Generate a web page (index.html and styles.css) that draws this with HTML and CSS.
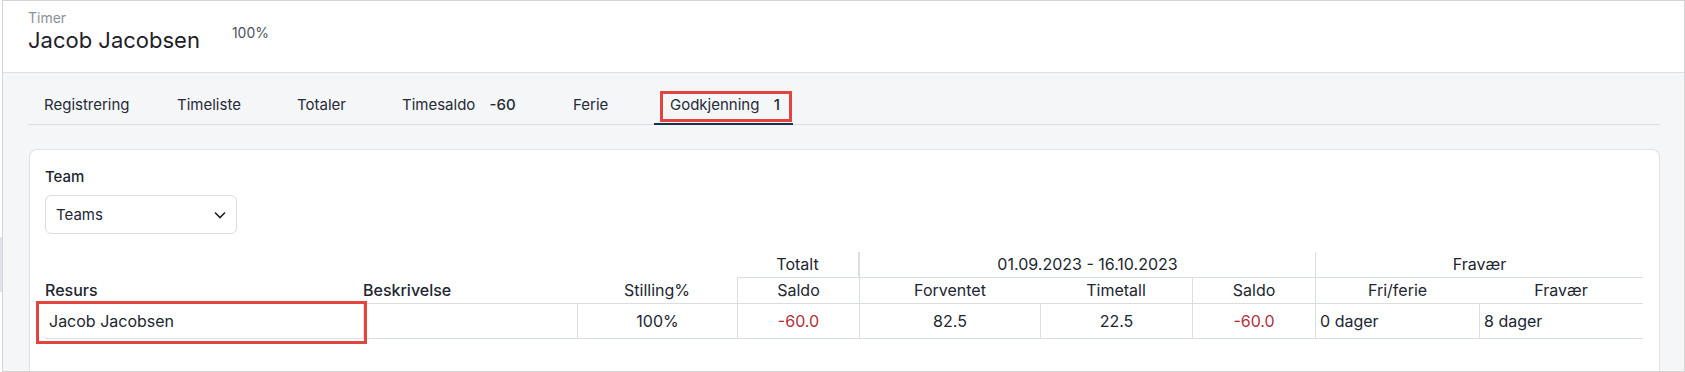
FILE: index.html
```html
<!DOCTYPE html>
<html lang="no">
<head>
    <meta charset="UTF-8">
    <meta name="viewport" content="width=device-width, initial-scale=1.0">
    <title>Timer - Jacob Jacobsen</title>
    <link rel="stylesheet" href="styles.css">
</head>
<body>
    <div class="gutter"><div class="gutter-mark"></div></div>
    <div class="frame">
        <header class="page-head">
            <div class="who">
                <div class="kicker">Timer</div>
                <h1 class="name">Jacob Jacobsen</h1>
            </div>
            <div class="pct">100%</div>
        </header>
        <main class="content">
            <nav class="tabs">
                <a class="tab">Registrering</a>
                <a class="tab">Timeliste</a>
                <a class="tab">Totaler</a>
                <a class="tab">Timesaldo <span class="count">-60</span></a>
                <a class="tab">Ferie</a>
                <a class="tab active">Godkjenning <span class="count">1</span><span class="mark"></span></a>
            </nav>
            <section class="card">
                <label class="field-label">Team</label>
                <div class="select">
                    <span>Teams</span>
                    <svg width="12" height="8" viewBox="0 0 12 8"><path d="M1 1.5l5 5 5-5" fill="none" stroke="#1f232b" stroke-width="1.6"/></svg>
                </div>
                <table class="grid">
                    <colgroup>
                        <col style="width:318px">
                        <col style="width:214px">
                        <col style="width:160px">
                        <col style="width:122px">
                        <col style="width:181px">
                        <col style="width:152px">
                        <col style="width:123px">
                        <col style="width:164px">
                        <col style="width:164px">
                    </colgroup>
                    <thead>
                        <tr>
                            <th rowspan="2" class="left">Resurs</th>
                            <th rowspan="2" class="left">Beskrivelse</th>
                            <th rowspan="2">Stilling%</th>
                            <th class="line">Totalt</th>
                            <th colspan="3" class="sep">01.09.2023 - 16.10.2023</th>
                            <th colspan="2" class="sep">Fravær</th>
                        </tr>
                        <tr>
                            <th class="sep">Saldo</th>
                            <th class="sep">Forventet</th>
                            <th>Timetall</th>
                            <th class="sep">Saldo</th>
                            <th class="sep">Fri/ferie</th>
                            <th>Fravær</th>
                        </tr>
                    </thead>
                    <tbody>
                        <tr>
                            <td class="left">Jacob Jacobsen<span class="mark"></span></td>
                            <td class="sep"></td>
                            <td class="sep">100%</td>
                            <td class="sep neg">-60.0</td>
                            <td class="sep">82.5</td>
                            <td class="sep">22.5</td>
                            <td class="sep neg">-60.0</td>
                            <td class="sep left">0 dager</td>
                            <td class="sep left">8 dager</td>
                        </tr>
                    </tbody>
                </table>
            </section>
        </main>
    </div>
</body>
</html>
```

FILE: styles.css
```css
body {
    margin: 0;
    width: 1685px;
    height: 372px;
    overflow: hidden;
    display: flex;
    background: #fff;
    font-family: Inter, "Noto Sans", sans-serif;
    color: #212631;
}
.gutter {
    width: 2px;
    flex: none;
}
.gutter-mark {
    margin-top: 237px;
    height: 55px;
    background: #dfe3ef;
}
.frame {
    width: 1683px;
    height: 372px;
    box-sizing: border-box;
    border: 1px solid #d4d4d4;
    background: #f4f6f8;
    overflow: hidden;
    display: flex;
    flex-direction: column;
}
.page-head {
    height: 72px;
    box-sizing: border-box;
    flex: none;
    display: flex;
    align-items: flex-start;
    padding: 8px 25px 0;
    background: #fff;
    border-bottom: 1px solid #dde1e7;
}
.kicker {
    font-size: 14px;
    line-height: 17px;
    color: #8b919b;
}
.name {
    margin: 0;
    font-size: 22px;
    line-height: 28px;
    font-weight: 400;
    color: #1d2028;
}
.pct {
    margin: 15px 0 0 32px;
    font-size: 14px;
    line-height: 17px;
    color: #4d5360;
}
.content {
    flex: 1;
    display: flex;
    flex-direction: column;
    padding: 18px 24px 0 25px;
}
.tabs {
    display: grid;
    grid-template-columns: 133px 120px 105px 171px 97px 139px;
    border-bottom: 1px solid #d9dde4;
}
.tab {
    position: relative;
    padding: 0 16px 4px;
    line-height: 28px;
    font-size: 15px;
    color: #262b36;
    white-space: nowrap;
    border-bottom: 2px solid transparent;
    margin-bottom: -1px;
}
.tab.active {
    border-bottom-color: #1f2d4e;
}
.count {
    margin-left: 10px;
    font-weight: 500;
}
.mark {
    position: absolute;
    border: 3px solid #e4443e;
}
.tab .mark {
    top: 0;
    left: 6px;
    right: 1px;
    bottom: 1px;
}
.card {
    flex: 1;
    margin: 24px 0 0 1px;
    padding: 18px 16px 0 15px;
    background: #fff;
    border: 1px solid #dde1e8;
    border-bottom: none;
    border-radius: 8px 8px 0 0;
}
.field-label {
    display: block;
    font-size: 15px;
    line-height: 18px;
    font-weight: 500;
    margin-bottom: 9px;
}
.select {
    width: 192px;
    height: 39px;
    box-sizing: border-box;
    display: flex;
    align-items: center;
    justify-content: space-between;
    padding: 0 10px;
    border: 1px solid #d9dde5;
    border-radius: 6px;
    font-size: 15px;
}
.grid {
    margin-top: 18px;
    width: 1598px;
    table-layout: fixed;
    border-collapse: separate;
    border-spacing: 0;
    font-size: 16px;
}
.grid th {
    padding: 0;
    line-height: 25px;
    font-weight: 400;
    text-align: center;
    vertical-align: bottom;
    border-bottom: 1px solid #d9dde5;
}
.grid th.left {
    font-weight: 500;
}
.grid td {
    padding: 0 4px;
    line-height: 34px;
    text-align: center;
    border-bottom: 1px solid #d9dde5;
}
.grid .left {
    text-align: left;
}
.grid .sep {
    border-left: 1px solid #d9dde5;
}
.grid .line {
    border-right: 1px solid #d9dde5;
}
.grid td:first-child {
    position: relative;
}
.grid td .mark {
    top: -3px;
    left: -9px;
    right: -4px;
    bottom: -6px;
}
.neg {
    color: #b02f3b;
}
```
